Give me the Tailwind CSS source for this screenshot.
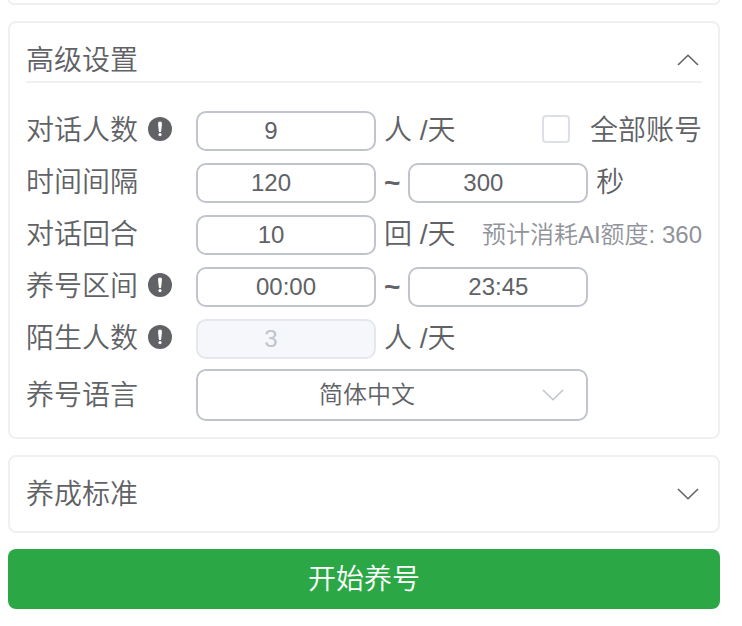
<!DOCTYPE html>
<html lang="zh-CN">
<head>
<meta charset="utf-8">
<meta name="viewport" content="width=device-width, initial-scale=1">
<title>高级设置</title>
<script src="https://cdn.jsdelivr.net/npm/@tailwindcss/browser@4"></script>
</head>
<body class="bg-white font-['Liberation_Sans','Noto_Sans_CJK_SC',sans-serif] text-[28px] leading-10 font-[350] text-[#606266]">
<svg class="hidden" aria-hidden="true">
  <symbol id="info" viewBox="0 0 24 24">
    <circle cx="12" cy="12" r="12" fill="#606266"/>
    <path d="M10 6.500a2 2 0 0 1 4 0l-.8 7.500a1.200 1.200 0 0 1-2.400 0z" fill="#fff"/>
    <circle cx="12" cy="17.600" r="1.600" fill="#fff"/>
  </symbol>
  <symbol id="chevron" viewBox="0 0 22 12">
    <path d="M1 1l10 9.700L21 1" fill="none" stroke="currentColor" stroke-width="1.600"/>
  </symbol>
</svg>
<main class="flex flex-col gap-4 pr-[22px] pl-2">
  <section class="h-[5px] rounded-b-lg border-2 border-t-0 border-[#f0f0f0]"></section>

  <section class="rounded-lg border-2 border-[#f0f0f0] p-4">
    <button type="button" aria-expanded="true" class="flex h-11 w-full items-center justify-between border-b-2 border-[#f0f0f0] pr-[3px]">
      <span class="pt-0.5">高级设置</span>
      <svg class="h-3 w-[22px] rotate-180"><use href="#chevron"/></svg>
    </button>

    <form class="pt-[22px]">
      <div class="flex h-[52px] items-center">
        <label for="people" class="flex w-[170px] shrink-0 items-center gap-[10px]">对话人数 <svg class="mb-1 size-6"><use href="#info"/></svg></label>
        <input id="people" value="9" class="h-10 w-[180px] rounded-[10px] border-2 border-[#c0c4cc] pr-[30px] text-center text-2xl font-normal">
        <span class="ml-2">人 /天</span>
        <label class="ml-auto flex items-center gap-5"><input type="checkbox" class="mb-1 size-7 appearance-none rounded-sm border-2 border-[#dcdfe6] bg-white checked:bg-[#409eff]">全部账号</label>
      </div>
      <div class="flex h-[52px] items-center">
        <label for="gap-min" class="w-[170px] shrink-0">时间间隔</label>
        <input id="gap-min" value="120" class="h-10 w-[180px] rounded-[10px] border-2 border-[#c0c4cc] pr-[30px] text-center text-2xl font-normal">
        <span class="mx-2 font-bold">~</span>
        <input aria-label="最大时间间隔" value="300" class="h-10 w-[180px] rounded-[10px] border-2 border-[#c0c4cc] pr-[30px] text-center text-2xl font-normal">
        <span class="ml-2">秒</span>
      </div>
      <div class="flex h-[52px] items-center">
        <label for="rounds" class="w-[170px] shrink-0">对话回合</label>
        <input id="rounds" value="10" class="h-10 w-[180px] rounded-[10px] border-2 border-[#c0c4cc] pr-[30px] text-center text-2xl font-normal">
        <span class="ml-2">回 /天</span>
        <span class="ml-auto text-2xl text-[#909399]">预计消耗AI额度: 360</span>
      </div>
      <div class="flex h-[52px] items-center">
        <label for="from" class="flex w-[170px] shrink-0 items-center gap-[10px]">养号区间 <svg class="mb-1 size-6"><use href="#info"/></svg></label>
        <input id="from" value="00:00" class="h-10 w-[180px] rounded-[10px] border-2 border-[#c0c4cc] text-center text-2xl font-normal">
        <span class="mx-2 font-bold">~</span>
        <input aria-label="结束时间" value="23:45" class="h-10 w-[180px] rounded-[10px] border-2 border-[#c0c4cc] text-center text-2xl font-normal">
      </div>
      <div class="flex h-[52px] items-center">
        <label for="strangers" class="flex w-[170px] shrink-0 items-center gap-[10px]">陌生人数 <svg class="mb-1 size-6"><use href="#info"/></svg></label>
        <input id="strangers" value="3" disabled class="h-10 w-[180px] rounded-[10px] border-2 border-[#e4e7ed] bg-[#f5f7fa] pr-[30px] text-center text-2xl font-normal text-[#c0c4cc]">
        <span class="ml-2">人 /天</span>
      </div>
      <div class="mt-1 flex h-[52px] items-center">
        <label for="lang" class="w-[170px] shrink-0 pt-0.5">养号语言</label>
        <div class="relative w-[392px]">
          <select id="lang" class="h-[52px] w-full appearance-none rounded-[10px] border-2 border-[#c0c4cc] bg-white pr-[50px] text-center text-2xl [text-align-last:center]">
            <option>简体中文</option>
          </select>
          <svg class="pointer-events-none absolute top-5 right-6 h-3 w-[22px] text-[#c0c4cc]"><use href="#chevron"/></svg>
        </div>
      </div>
    </form>
  </section>

  <section class="rounded-lg border-2 border-[#f0f0f0] p-4">
    <button type="button" aria-expanded="false" class="flex h-[42px] w-full items-center justify-between pr-[3px]">
      <span class="pt-0.5">养成标准</span>
      <svg class="h-3 w-[22px]"><use href="#chevron"/></svg>
    </button>
  </section>

  <button type="button" class="h-[60px] rounded-lg bg-[#2ba845] pt-0.5 text-white">开始养号</button>
</main>
</body>
</html>
